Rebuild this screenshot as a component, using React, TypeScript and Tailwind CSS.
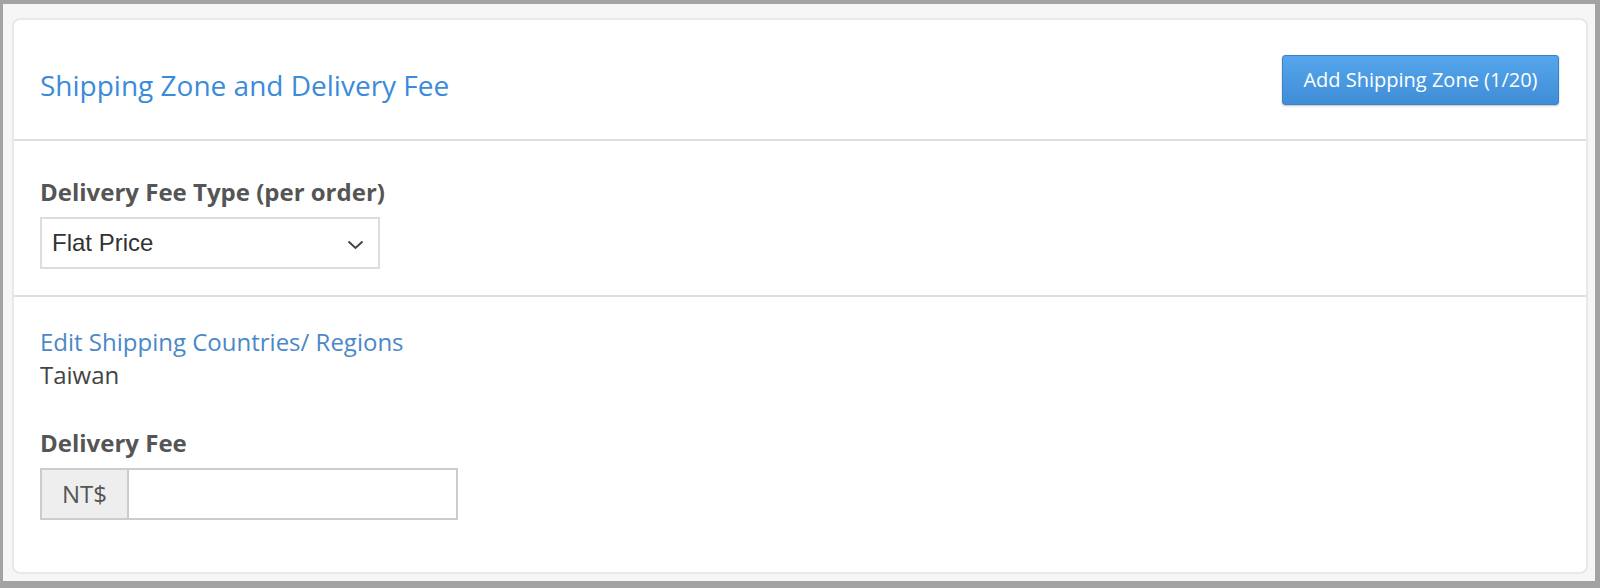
export default function App() {
  return (
    <div className="h-[588px] w-[1600px] bg-[#a3a3a3] pb-[7px] pl-[3px] pr-[5px] pt-[4px] font-['Open_Sans',sans-serif]">
      <div className="h-full bg-[#f6f6f6] pb-[7px] pl-[9px] pr-[7px] pt-[14px]">
        <div className="flex h-full flex-col rounded-[8px] border-2 border-[#e8e8e8] bg-white">
          {/* header */}
          <div className="flex h-[121px] items-start justify-between border-b-2 border-[#dedede] pl-[26px] pr-[27px] pt-[35px]">
            <h2 className="mt-[11px] text-[28px] leading-[38px] text-[#3b8bdb]">
              Shipping Zone and Delivery Fee
            </h2>
            <button
              type="button"
              className="h-[50px] w-[277px] rounded-[3px] border border-[#3b83c6] bg-gradient-to-b from-[#55a6ee] to-[#3f8dd6] text-[20px] text-white shadow-[0_1px_2px_rgba(0,0,0,0.25)]"
            >
              Add Shipping Zone (1/20)
            </button>
          </div>

          {/* fee type */}
          <div className="h-[156px] border-b-2 border-[#dedede] pl-[26px] pt-[35px]">
            <label className="block text-[24px] font-bold leading-[32px] text-[#555555]">
              Delivery Fee Type (per order)
            </label>
            <div className="mt-[9px] flex h-[52px] w-[340px] items-center justify-between border-2 border-[#dddddd] pl-[10px] pr-[14px]">
              <span className="font-['Liberation_Sans',Arial,sans-serif] text-[24px] text-[#333333]">
                Flat Price
              </span>
              <svg width="17" height="10" viewBox="0 0 17 10" fill="none" className="mt-[4px]">
                <polyline points="1.5,1.5 8.5,8 15.5,1.5" stroke="#444444" strokeWidth="2" />
              </svg>
            </div>
          </div>

          {/* zone */}
          <div className="flex-1 pl-[26px] pt-[28px]">
            <a className="block text-[24px] leading-[33px] text-[#4a88c9]">
              Edit Shipping Countries/ Regions
            </a>
            <p className="text-[24px] leading-[33px] text-[#444444]">Taiwan</p>
            <label className="mt-[36px] block text-[24px] font-bold leading-[32px] text-[#555555]">
              Delivery Fee
            </label>
            <div className="mt-[9px] flex h-[52px] w-[418px] border-2 border-[#cccccc]">
              <div className="flex w-[87px] items-center justify-center border-r-2 border-[#cccccc] bg-[#eeeeee] text-[24px] text-[#555555]">
                NT$
              </div>
              <input type="text" className="min-w-0 flex-1 bg-white px-3 text-[24px] outline-none" />
            </div>
          </div>
        </div>
      </div>
    </div>
  );
}
